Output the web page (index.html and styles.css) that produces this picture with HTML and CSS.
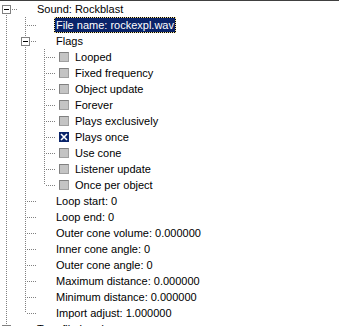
FILE: index.html
```html
<!DOCTYPE html>
<html>
<head>
<meta charset="utf-8">
<link rel="stylesheet" href="styles.css">
</head>
<body>
<div class="tree">
  <div class="row"><span class="c first"><span class="box"></span></span><span class="slot"></span><span class="label">Sound: Rockblast</span></div>
  <div class="row"><span class="c v"></span><span class="c t"></span><span class="slot"></span><span class="label sel">File name: rockexpl.wav</span></div>
  <div class="row"><span class="c v"></span><span class="c t"><span class="box"></span></span><span class="slot"></span><span class="label">Flags</span></div>
  <div class="row"><span class="c v"></span><span class="c v"></span><span class="c t"></span><span class="slot"><span class="chk"></span></span><span class="label">Looped</span></div>
  <div class="row"><span class="c v"></span><span class="c v"></span><span class="c t"></span><span class="slot"><span class="chk"></span></span><span class="label">Fixed frequency</span></div>
  <div class="row"><span class="c v"></span><span class="c v"></span><span class="c t"></span><span class="slot"><span class="chk"></span></span><span class="label">Object update</span></div>
  <div class="row"><span class="c v"></span><span class="c v"></span><span class="c t"></span><span class="slot"><span class="chk"></span></span><span class="label">Forever</span></div>
  <div class="row"><span class="c v"></span><span class="c v"></span><span class="c t"></span><span class="slot"><span class="chk"></span></span><span class="label">Plays exclusively</span></div>
  <div class="row"><span class="c v"></span><span class="c v"></span><span class="c t"></span><span class="slot"><span class="chk on"><svg width="8" height="8" viewBox="0 0 8 8"><path d="M1 1L7 7M7 1L1 7" stroke="#fff" stroke-width="1.6" fill="none"/></svg></span></span><span class="label">Plays once</span></div>
  <div class="row"><span class="c v"></span><span class="c v"></span><span class="c t"></span><span class="slot"><span class="chk"></span></span><span class="label">Use cone</span></div>
  <div class="row"><span class="c v"></span><span class="c v"></span><span class="c t"></span><span class="slot"><span class="chk"></span></span><span class="label">Listener update</span></div>
  <div class="row"><span class="c v"></span><span class="c v"></span><span class="c l"></span><span class="slot"><span class="chk"></span></span><span class="label">Once per object</span></div>
  <div class="row"><span class="c v"></span><span class="c t"></span><span class="slot"></span><span class="label">Loop start: 0</span></div>
  <div class="row"><span class="c v"></span><span class="c t"></span><span class="slot"></span><span class="label">Loop end: 0</span></div>
  <div class="row"><span class="c v"></span><span class="c t"></span><span class="slot"></span><span class="label">Outer cone volume: 0.000000</span></div>
  <div class="row"><span class="c v"></span><span class="c t"></span><span class="slot"></span><span class="label">Inner cone angle: 0</span></div>
  <div class="row"><span class="c v"></span><span class="c t"></span><span class="slot"></span><span class="label">Outer cone angle: 0</span></div>
  <div class="row"><span class="c v"></span><span class="c t"></span><span class="slot"></span><span class="label">Maximum distance: 0.000000</span></div>
  <div class="row"><span class="c v"></span><span class="c t"></span><span class="slot"></span><span class="label">Minimum distance: 0.000000</span></div>
  <div class="row"><span class="c v"></span><span class="c l"></span><span class="slot"></span><span class="label">Import adjust: 1.000000</span></div>
  <div class="row"><span class="c t"><span class="box plus"></span></span><span class="slot"></span><span class="label">Tree file header</span></div>
</div>
</body>
</html>
```

FILE: styles.css
```css
html, body {
  margin: 0;
  padding: 0;
  background: #fff;
  overflow: hidden;
}

body {
  width: 339px;
  height: 326px;
  font-family: "Liberation Sans", Arial, sans-serif;
  font-size: 11px;
  color: #000;
}

.tree {
  border-top: 1px solid #404040;
}

.row {
  display: flex;
  align-items: center;
  height: 16px;
}

.c {
  position: relative;
  flex: none;
  width: 19px;
  height: 16px;
}

.c::before,
.c::after {
  content: "";
  position: absolute;
}

.v::before,
.t::before {
  left: 6px;
  top: 0;
  width: 1px;
  height: 16px;
  background: repeating-linear-gradient(to bottom, #808080 0 1px, transparent 1px 2px);
}

.l::before {
  left: 6px;
  top: 0;
  width: 1px;
  height: 8px;
  background: repeating-linear-gradient(to bottom, #808080 0 1px, transparent 1px 2px);
}

.first::before {
  left: 6px;
  top: 8px;
  width: 1px;
  height: 8px;
  background: repeating-linear-gradient(to bottom, #808080 0 1px, transparent 1px 2px);
}

.t::after,
.l::after,
.first::after {
  left: 7px;
  top: 8px;
  width: 10px;
  height: 1px;
  background: repeating-linear-gradient(to right, transparent 0 1px, #808080 1px 2px);
}

.box {
  position: absolute;
  left: 2px;
  top: 4px;
  width: 7px;
  height: 7px;
  border: 1px solid #808080;
  background: #fff;
  z-index: 1;
}

.box::before {
  content: "";
  position: absolute;
  left: 1px;
  top: 3px;
  width: 5px;
  height: 1px;
  background: #000;
}

.box.plus::after {
  content: "";
  position: absolute;
  left: 3px;
  top: 1px;
  width: 1px;
  height: 5px;
  background: #000;
}

.slot {
  flex: none;
  width: 16px;
  height: 16px;
  display: flex;
  align-items: center;
}

.chk {
  margin-left: 2px;
  width: 8px;
  height: 8px;
  border: 1px solid #808080;
  border-right-color: #a0a0a0;
  border-bottom-color: #a0a0a0;
  background: #c4c4c4;
  display: flex;
  align-items: center;
  justify-content: center;
}

.chk.on {
  background: #0a246a;
  border-color: #0a246a;
}

.chk svg {
  display: block;
}

.label {
  height: 14px;
  line-height: 14px;
  padding: 0 1px;
  border: 1px solid transparent;
  white-space: nowrap;
}

.label.sel {
  color: #fff;
  border: 1px dotted #f0e0a0;
  background:
    linear-gradient(#0a246a, #0a246a) padding-box,
    linear-gradient(#000, #000) border-box;
}
```
